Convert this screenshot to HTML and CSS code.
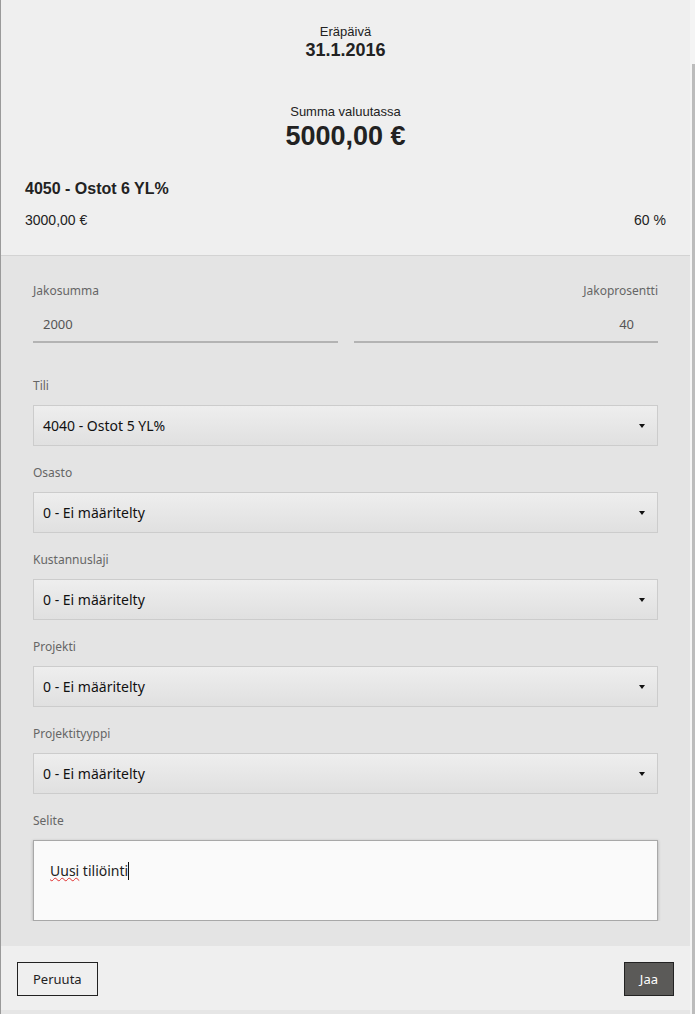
FILE: index.html
```html
<!DOCTYPE html>
<html>

<head>
    <title>Jaa tiliöinti</title>
    <link rel="stylesheet" href="styles.css">
</head>

<body>
    <div class="page">
        <div class="dialog">
            <div class="summary">
                <div class="summary-label">Eräpäivä</div>
                <div class="due-date">31.1.2016</div>
                <div class="summary-label amount-label">Summa valuutassa</div>
                <div class="amount">5000,00 €</div>
                <div class="account-name">4050 - Ostot 6 YL%</div>
                <div class="account-row">
                    <span>3000,00 €</span>
                    <span>60 %</span>
                </div>
            </div>

            <div class="form">
                <div class="split-row">
                    <div class="split-field">
                        <div class="field-label">Jakosumma</div>
                        <div class="text-input">2000</div>
                    </div>
                    <div class="split-field right">
                        <div class="field-label">Jakoprosentti</div>
                        <div class="text-input">40</div>
                    </div>
                </div>

                <div class="field first">
                    <div class="field-label">Tili</div>
                    <div class="select">4040 - Ostot 5 YL%<span class="caret"></span></div>
                </div>
                <div class="field">
                    <div class="field-label">Osasto</div>
                    <div class="select">0 - Ei määritelty<span class="caret"></span></div>
                </div>
                <div class="field">
                    <div class="field-label">Kustannuslaji</div>
                    <div class="select">0 - Ei määritelty<span class="caret"></span></div>
                </div>
                <div class="field">
                    <div class="field-label">Projekti</div>
                    <div class="select">0 - Ei määritelty<span class="caret"></span></div>
                </div>
                <div class="field">
                    <div class="field-label">Projektityyppi</div>
                    <div class="select">0 - Ei määritelty<span class="caret"></span></div>
                </div>
                <div class="field">
                    <div class="field-label">Selite</div>
                    <div class="textarea"><span class="misspelled">Uusi</span> tiliöinti<span class="cursor"></span></div>
                </div>
            </div>

            <div class="footer">
                <button class="btn">Peruuta</button>
                <button class="btn primary">Jaa</button>
            </div>
        </div>
        <div class="scroll-track">
            <div class="scroll-thumb"></div>
        </div>
    </div>
</body>

</html>
```

FILE: styles.css
```css
html,
body {
    margin: 0;
    padding: 0;
}

body {
    background-color: #f4f4f4;
    font-family: "Liberation Sans", Arial, sans-serif;
    color: #222222;
}

.page {
    display: flex;
    height: 1014px;
    overflow: hidden;
}

.dialog {
    width: 689px;
    border-left: 1px solid #9a9a9a;
    display: flex;
    flex-direction: column;
}

.scroll-track {
    width: 5px;
    padding-top: 64px;
    display: flex;
    justify-content: flex-end;
}

.scroll-thumb {
    width: 3px;
    background-color: #bcbcbc;
}

/* summary */

.summary {
    background-color: #efefef;
    border-bottom: 1px solid #d3d3d3;
    padding: 24px 24px 26px 24px;
    text-align: center;
}

.summary-label {
    font-size: 13px;
    line-height: 16px;
}

.due-date {
    font-size: 18px;
    line-height: 20px;
    font-weight: bold;
}

.amount-label {
    margin-top: 44px;
}

.amount {
    font-size: 27px;
    line-height: 32px;
    font-weight: bold;
}

.account-name {
    margin-top: 27px;
    text-align: left;
    font-size: 16px;
    line-height: 20px;
    font-weight: bold;
}

.account-row {
    margin-top: 12px;
    display: flex;
    justify-content: space-between;
    font-size: 14px;
    line-height: 18px;
}

/* form */

.form {
    flex: 1;
    background-color: #e4e4e4;
    padding: 26px 32px 0 32px;
    font-family: "Noto Sans", "Open Sans", sans-serif;
}

.field-label {
    font-size: 12px;
    line-height: 18px;
    color: #666666;
}

.split-row {
    display: flex;
    gap: 16px;
}

.split-field {
    flex: 1;
}

.split-field.right {
    text-align: right;
}

.text-input {
    margin-top: 8px;
    height: 33px;
    line-height: 33px;
    padding: 0 10px;
    border-bottom: 2px solid #b3b3b3;
    font-size: 13px;
    color: #555555;
}

.split-field.right .text-input {
    padding-right: 24px;
}

.field {
    margin-top: 18px;
}

.field.first {
    margin-top: 34px;
}

.select {
    margin-top: 10px;
    height: 39px;
    line-height: 39px;
    padding: 0 9px;
    border: 1px solid #cccccc;
    background: linear-gradient(#eeeeee, #e0e0e0);
    font-size: 14px;
    color: #111111;
    display: flex;
    justify-content: space-between;
    align-items: center;
}

.caret {
    width: 0;
    height: 0;
    margin-right: 3px;
    border-left: 3px solid transparent;
    border-right: 3px solid transparent;
    border-top: 4px solid #111111;
}

.textarea {
    margin-top: 10px;
    border: 1px solid #a8a8a8;
    background-color: #fafafa;
    box-shadow: 0 1px 3px rgba(0, 0, 0, 0.25);
    padding: 19px 16px 0 16px;
    box-sizing: border-box;
    height: 81px;
    font-size: 14px;
    line-height: 22px;
    color: #222222;
}

.misspelled {
    text-decoration: underline wavy #e03030;
    text-decoration-thickness: 1px;
}

.cursor {
    display: inline-block;
    width: 1px;
    height: 18px;
    background-color: #111111;
    vertical-align: -4px;
}

/* footer */

.footer {
    background-color: #efefef;
    border-top: 25px solid #e4e4e4;
    border-bottom: 4px solid #e6e6e6;
    padding: 16px 16px 14px 16px;
    display: flex;
    justify-content: space-between;
}

.btn {
    height: 34px;
    padding: 0 15px;
    border: 1px solid #222222;
    background-color: transparent;
    font-family: "Noto Sans", "Open Sans", sans-serif;
    font-size: 13px;
    color: #222222;
}

.btn.primary {
    background-color: #5b5a58;
    color: #ffffff;
}
```
